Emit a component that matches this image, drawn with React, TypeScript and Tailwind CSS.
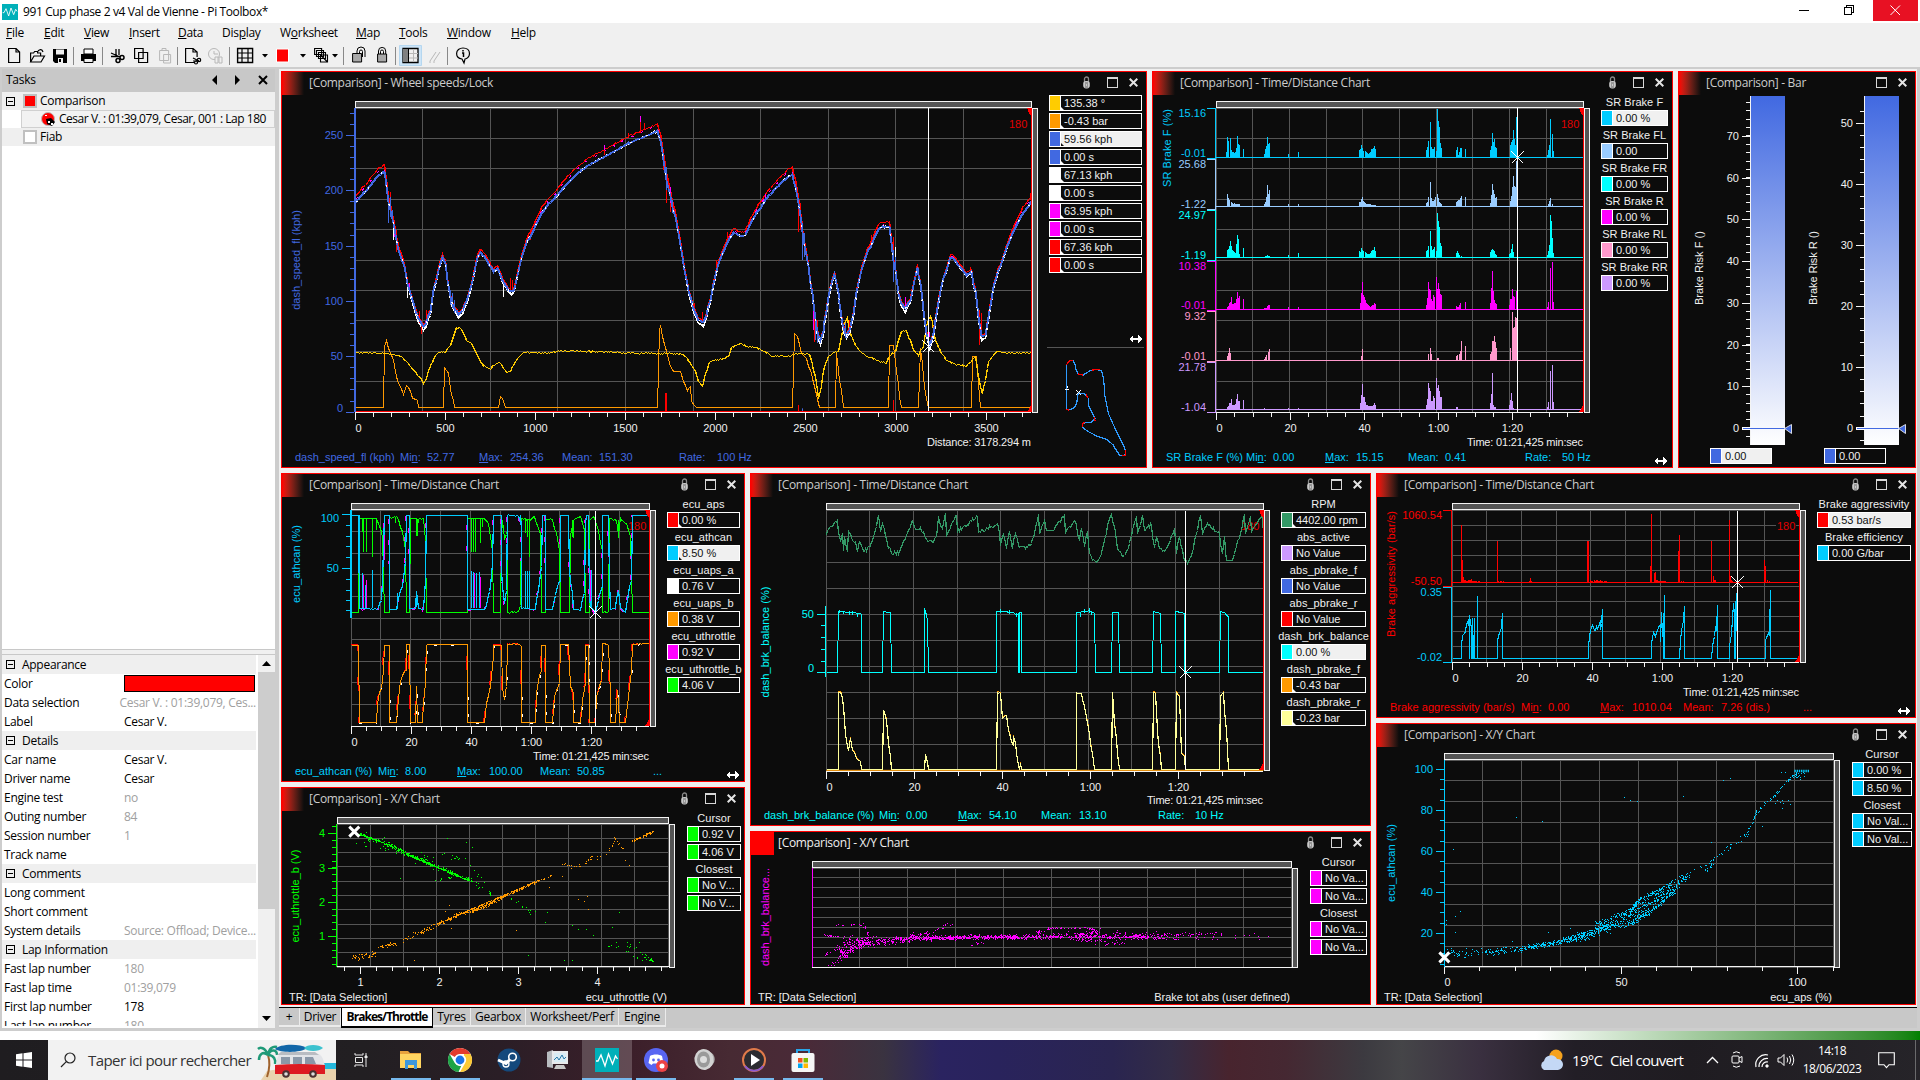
import React from "react";

type Pt = [number, number];
interface Frame {
  X: (x: number) => number;
  Y: (y: number) => number;
}

const frame = (ox: number, oy: number, sx: number): Frame => ({
  X: (x) => ox + x / sx,
  Y: (y) => oy + y / 3,
});

const rng = (seed: number) => {
  let s = seed >>> 0;
  return () => {
    s = (s + 0x6d2b79f5) >>> 0;
    let t = s;
    t = Math.imul(t ^ (t >>> 15), t | 1);
    t ^= t + Math.imul(t ^ (t >>> 7), t | 61);
    return ((t ^ (t >>> 14)) >>> 0) / 4294967296;
  };
};

const nums = (s: string): Pt[] =>
  s
    .trim()
    .split(/\s+/)
    .map((p) => p.split(",").map(Number) as Pt);

const snap = (v: number) => Math.floor(v) + 0.5;

function tracePath(f: Frame, pts: Pt[], noise = 0, seed = 1, map?: (x: number, y: number) => Pt) {
  const r = rng(seed);
  const out: string[] = [];
  pts.forEach((p, i) => {
    const b: Pt = map ? map(p[0], p[1]) : p;
    const x = f.X(b[0]);
    const y = f.Y(b[1]);
    if (i > 0) {
      const q = pts[i - 1];
      const a: Pt = map ? map(q[0], q[1]) : q;
      const ax = f.X(a[0]);
      const ay = f.Y(a[1]);
      const n = Math.floor(x - ax);
      const amp = q[1] === p[1] ? 0 : noise;
      for (let k = 1; k < n; k++) {
        const t = k / n;
        out.push(`${snap(ax + (x - ax) * t)} ${snap(ay + (y - ay) * t + (r() - 0.5) * amp)}`);
      }
    }
    out.push(`${snap(x)} ${snap(y)}`);
  });
  return "M" + out.join("L");
}

function Trace(p: { f: Frame; d: Pt[]; c: string; noise?: number; seed?: number; w?: number; dash?: string; map?: (x: number, y: number) => Pt }) {
  return (
    <path
      d={tracePath(p.f, p.d, p.noise, p.seed, p.map)}
      fill="none"
      stroke={p.c}
      strokeWidth={p.w ?? 1}
      strokeDasharray={p.dash}
      shapeRendering="crispEdges"
    />
  );
}

/* Vertical strokes rising from a baseline: "x,h x,h | x,h ..." */
function Bursts(p: { f: Frame; base: number; s: string; c: string; seed?: number; x0: number; x1: number; rough?: number }) {
  const r = rng(p.seed ?? 3);
  const rough = p.rough ?? 0.6;
  let d = `M${p.f.X(p.x0)} ${snap(p.f.Y(p.base))}H${p.f.X(p.x1)}`;
  const by = p.f.Y(p.base) + 0.5;
  p.s.split("|").forEach((grp) => {
    const g = nums(grp);
    g.forEach((q, i) => {
      const x = p.f.X(q[0]);
      d += `M${snap(x)} ${by}V${(by - q[1] / 3).toFixed(1)}`;
      if (i > 0) {
        const a = g[i - 1];
        const ax = p.f.X(a[0]);
        const n = Math.round(x - ax);
        for (let k = 1; k < n; k++) {
          const t = k / n;
          const h = (a[1] + (q[1] - a[1]) * t) * (1 - rough * r());
          d += `M${snap(ax + k)} ${by}V${(by - h / 3).toFixed(1)}`;
        }
      }
    });
  });
  return <path d={d} fill="none" stroke={p.c} strokeWidth={1} shapeRendering="crispEdges" />;
}

function Dots(p: { pts: Pt[]; c: string }) {
  const d = p.pts.map(([x, y]) => `M${Math.round(x)} ${Math.round(y)}h1v1h-1z`).join("");
  return <path d={d} fill={p.c} shapeRendering="crispEdges" />;
}

/* Scatter along a polyline; vertices hold x, y, spread and the point count up to the next vertex */
function cloud(f: Frame, line: [number, number, number, number][], seed: number): Pt[] {
  const r = rng(seed);
  const out: Pt[] = [];
  for (let i = 1; i < line.length; i++) {
    const [ax, ay, as, count] = line[i - 1];
    const [bx, by, bs] = line[i];
    for (let k = 0; k < count; k++) {
      const t = r();
      const sp = as + (bs - as) * t;
      out.push([f.X(ax + (bx - ax) * t), f.Y(ay + (by - ay) * t + (r() + r() - 1) * sp)]);
    }
  }
  return out;
}

function Txt(p: { x: number; y: number; c?: string; a?: "start" | "middle" | "end"; children: React.ReactNode; len?: number; rot?: boolean }) {
  return (
    <text
      x={p.x}
      y={p.y}
      fill={p.c ?? "#f0f0f0"}
      textAnchor={p.a ?? "start"}
      className="font-['Liberation_Sans',sans-serif] text-[11px]"
      textLength={p.len}
      transform={p.rot ? `rotate(-90 ${p.x} ${p.y})` : undefined}
    >
      {p.children}
    </text>
  );
}

function Grid(p: { f: Frame; x0: number; x1: number; y0: number; y1: number }) {
  const X0 = Math.floor(p.f.X(p.x0));
  const X1 = Math.floor(p.f.X(p.x1));
  const Y0 = Math.floor(p.f.Y(p.y0));
  const Y1 = Math.floor(p.f.Y(p.y1));
  let d = "";
  for (let i = 0; i <= 10; i++) {
    d += `M${snap(X0 + ((X1 - X0) * i) / 10)} ${Y0}V${Y1}`;
    d += `M${X0} ${snap(Y0 + ((Y1 - Y0) * i) / 10)}H${X1}`;
  }
  return (
    <g shapeRendering="crispEdges">
      <path d={d} stroke="#555555" fill="none" />
      <rect x={X0 + 0.5} y={Y0 - 6.5} width={X1 - X0} height={6} fill="#555555" stroke="#f4f4f4" />
      <rect x={X1 + 1.5} y={Y0 + 0.5} width={5} height={Y1 - Y0} fill="#555555" stroke="#f4f4f4" />
    </g>
  );
}

function LapEdge(p: { f: Frame; x1: number; y0: number; y1: number }) {
  const x = Math.floor(p.f.X(p.x1));
  const y0 = Math.floor(p.f.Y(p.y0));
  const y1 = Math.floor(p.f.Y(p.y1));
  return <path d={`M${x - 4} ${y0}h5V${y1}h-5l2-3l2-4V${y0 + 8}l-2-3z`} fill="#ff0000" shapeRendering="crispEdges" />;
}

function XAxis(p: { f: Frame; x0: number; x1: number; y: number; first: number; step: number; every: number; offset?: number; labels: string[] }) {
  const Y = Math.floor(p.f.Y(p.y)) + 1;
  let d = `M${Math.floor(p.f.X(p.x0))} ${Y - 0.5}H${p.f.X(p.x1)}`;
  const off = p.offset ?? 0;
  const labels: React.ReactNode[] = [];
  for (let i = 0; p.first + i * p.step <= p.x1 + 1; i++) {
    const x = snap(p.f.X(p.first + i * p.step));
    const major = (i - off) % p.every === 0;
    d += `M${x} ${Y}v${major ? 7 : 4}`;
    if (major) {
      const n = (i - off) / p.every;
      labels.push(
        <Txt key={i} x={x + (n === 0 && off === 0 ? 3 : 0)} y={Y + 19} a="middle">
          {p.labels[n]}
        </Txt>,
      );
    }
  }
  return (
    <g>
      <path d={d} stroke="#f4f4f4" fill="none" shapeRendering="crispEdges" />
      {labels}
    </g>
  );
}

function YAxis(p: { f: Frame; x: number; y0: number; y1: number; c: string; major: [number, string, number?][]; minor: number[]; w?: number }) {
  const X = Math.floor(p.f.X(p.x));
  let d = "";
  p.minor.forEach((y) => (d += `M${X - 5} ${snap(p.f.Y(y))}h4`));
  p.major.forEach(([y]) => (d += `M${X - 9} ${snap(p.f.Y(y))}h8`));
  return (
    <g>
      <path d={d} stroke={p.c} fill="none" shapeRendering="crispEdges" />
      <rect x={X - 1} y={Math.floor(p.f.Y(p.y0))} width={p.w ?? 2} height={Math.round(p.f.Y(p.y1) - p.f.Y(p.y0))} fill={p.c} shapeRendering="crispEdges" />
      {p.major.map(([y, t, ly]) => (
        <Txt key={t} x={X - 12} y={p.f.Y(ly ?? y) + 4} c={p.c} a="end">
          {t}
        </Txt>
      ))}
    </g>
  );
}

function Bracket(p: { f: Frame; x: number; y0: number; y1: number; c: string; top: string; bottom: string; ty: number; by: number }) {
  const X = Math.floor(p.f.X(p.x));
  return (
    <g>
      <path
        d={`M${X - 9} ${snap(p.f.Y(p.y0))}H${X - 0.5}V${snap(p.f.Y(p.y1))}H${X - 9}`}
        stroke={p.c}
        fill="none"
        shapeRendering="crispEdges"
      />
      <Txt x={X - 10} y={p.f.Y(p.ty) + 4} c={p.c} a="end">
        {p.top}
      </Txt>
      <Txt x={X - 10} y={p.f.Y(p.by) + 4} c={p.c} a="end">
        {p.bottom}
      </Txt>
    </g>
  );
}

function Cursor(p: { f: Frame; x: number; y0: number; y1: number; y: number }) {
  const x = snap(p.f.X(p.x));
  const y = snap(p.f.Y(p.y));
  return (
    <path
      d={`M${x} ${p.f.Y(p.y0)}V${p.f.Y(p.y1)}M${x - 6} ${y - 6}l12 12M${x + 6} ${y - 6}l-12 12`}
      stroke="#ffffff"
      fill="none"
      shapeRendering="crispEdges"
    />
  );
}

function BoldX(p: { x: number; y: number }) {
  return <path d={`M${p.x - 5} ${p.y - 5}l10 10M${p.x + 5} ${p.y - 5}l-10 10`} stroke="#fff" strokeWidth="3" fill="none" />;
}

/* ---------- window chrome ---------- */

function LockGlyph() {
  return (
    <svg width="9" height="13" viewBox="0 0 9 13" className="mr-4">
      <path d="M2.5 6V3a2 2 0 0 1 4 0v3" fill="none" stroke="#8a8a8a" strokeWidth="1.3" />
      <rect x="1.2" y="5" width="6.6" height="7.4" rx="2.8" fill="#c9c9c9" />
      <path d="M3 7h3M3 9h1M5 9h1M3 11h3" stroke="#666" />
    </svg>
  );
}

function DoubleArrow() {
  return (
    <svg width="13" height="8" viewBox="0 0 13 8" shapeRendering="crispEdges">
      <path d="M0 4L4 0V3H9V0L13 4L9 8V5H4V8Z" fill="#ffffff" />
    </svg>
  );
}

interface Stat {
  x: number;
  t: string;
  u?: number;
}

function Under({ t, u }: { t: string; u?: number }) {
  if (u === undefined) return <>{t}</>;
  return (
    <>
      {t.slice(0, u)}
      <span className="underline">{t[u]}</span>
      {t.slice(u + 1)}
    </>
  );
}

function Stats(p: { left: number; items: Stat[]; c: string; arrow?: boolean }) {
  return (
    <footer className="flex h-[18px] shrink-0 items-start pr-[5px] text-[11px] leading-4 whitespace-nowrap" style={{ color: p.c, paddingLeft: p.items[0].x - p.left }}>
      {p.items.map((s, i) => (
        <span key={i} className="shrink-0" style={{ width: i + 1 < p.items.length ? p.items[i + 1].x - s.x : undefined }}>
          <Under t={s.t} u={s.u} />
        </span>
      ))}
      {p.arrow && (
        <span className="mt-2 ml-auto">
          <DoubleArrow />
        </span>
      )}
    </footer>
  );
}

function XYFooter(p: { pl: number; right: string; width: number }) {
  return (
    <footer className="flex h-[15px] shrink-0 items-start justify-between pt-px text-[11px] leading-[14px] text-[#f0f0f0]" style={{ width: p.width, paddingLeft: p.pl }}>
      <span>TR: [Data Selection]</span>
      <span>{p.right}</span>
    </footer>
  );
}

interface Entry {
  label?: string;
  c?: string;
  v?: string;
  sel?: boolean;
  notch?: boolean;
}

function ValueBox({ e }: { e: Entry }) {
  return (
    <div
      className={
        e.sel
          ? "mb-0.5 flex h-4 overflow-hidden border border-white bg-[#f0f0f0] text-[11px] leading-[14px] whitespace-nowrap text-[#111]"
          : "mb-0.5 flex h-4 overflow-hidden border border-white bg-[#0c0c0c] text-[11px] leading-[14px] whitespace-nowrap text-[#f0f0f0]"
      }
    >
      <span className="w-2.5 shrink-0" style={{ backgroundColor: e.c }} />
      <span className="w-[3px] shrink-0 border-l border-white">
        {e.notch && (
          <svg width="3" height="14" viewBox="0 0 3 14">
            <path d="M0 11l3 3H0z" fill={e.sel ? "#111" : "#fff"} />
          </svg>
        )}
      </span>
      <span className="pl-[1px]">{e.v}</span>
    </div>
  );
}

function Legend(p: { w: string; items: Entry[]; children?: React.ReactNode }) {
  return (
    <aside className={"flex shrink-0 flex-col " + p.w}>
      {p.items.map((e, i) =>
        e.label ? (
          <div key={i} className="flex h-[15px] justify-center overflow-visible text-[11px] leading-[14px] tracking-[0.05px] whitespace-nowrap text-[#f0f0f0]">
            {e.label}
          </div>
        ) : (
          <ValueBox key={i} e={e} />
        ),
      )}
      {p.children}
    </aside>
  );
}

function Panel(p: { title: string; box: string; solid?: boolean; lock?: boolean; footer?: React.ReactNode; children: React.ReactNode }) {
  return (
    <section className={"flex shrink-0 flex-col overflow-hidden border border-[#ff0000] bg-[#0c0c0c] font-['Liberation_Sans',sans-serif] " + p.box}>
      <header className="flex h-[23px] shrink-0 items-center pr-2">
        <div className={p.solid ? "h-full w-[23px] bg-[#ff0000]" : "h-full w-[22px] bg-linear-to-r from-[#ff0000] to-[#0c0c0c]"} />
        <span
          className={
            p.solid
              ? "ml-1 flex-1 pb-0.5 font-['Open_Sans',sans-serif] text-[12px] tracking-[-0.3px] text-[#f0f0f0]"
              : "ml-[5px] flex-1 pb-0.5 font-['Open_Sans',sans-serif] text-[12px] tracking-[-0.3px] text-[#cccccc]"
          }
        >
          {p.title}
        </span>
        <div className="flex items-center pb-0.5">
          {p.lock !== false && <LockGlyph />}
          <span className="mr-[11px] h-[11px] w-[11px] border border-t-2 border-[#d8d8d8]" />
          <svg width="9" height="9" viewBox="0 0 9 9">
            <path d="M.7.7l7.6 7.6M8.3.7L.7 8.3" stroke="#e4e4e4" strokeWidth="2" />
          </svg>
        </div>
      </header>
      <div className="flex min-h-0 flex-1">{p.children}</div>
      {p.footer}
    </section>
  );
}

function Plot(p: { x: number; y: number; w: number; h: number; children: React.ReactNode }) {
  return (
    <svg width={p.w} height={p.h} viewBox={`${p.x} ${p.y} ${p.w} ${p.h}`} className="shrink-0">
      {p.children}
    </svg>
  );
}

/* ---------- Wheel speeds ---------- */

const F1 = frame(280, 70, 3);
const shift = (s: string, dx: number): Pt[] => nums(s).map(([x, y]) => [x + dx, y] as Pt);

const SPEED: Pt[] = [
  ...nums(
    "226,398 255,365 280,335 300,312 313,305 320,350 330,420 340,460 350,510 360,555 372,590 382,640 395,680 410,730 420,755 430,770 440,758 450,725 458,680 465,640 475,600 488,562 495,580 503,630 512,680 522,715 535,732 548,722 558,695 570,655 580,620 590,575 600,548 612,560 625,580 640,603 652,595 662,615 672,640 685,660 695,665 703,655 712,615 725,565 740,520 760,480 785,430 810,398 835,372 860,343 890,313 930,282 970,262 1010,240 1040,223 1080,205 1110,192 1132,182 1140,210 1150,270 1160,330 1172,380 1185,440 1200,525 1212,600 1225,660 1240,715 1255,750 1270,758 1280,735 1290,690 1300,640",
  ),
  ...shift(
    "25,580 40,545 55,510 70,488 95,500 105,495 125,455 150,415 170,385 190,362 215,338 240,315 248,313 255,350 265,400 275,460 285,540 295,590 302,640 310,700 320,770 330,812 340,785 348,720 355,680 365,640 374,612 380,640 388,700 398,760 408,795 418,780 430,730 440,665 455,600 470,555 490,510 510,472 537,470 545,520 555,600 565,670 575,700 587,716 600,690 612,630 622,592 630,640 640,720 650,790 658,830 670,790 680,730 692,660 705,610 720,562 730,565 745,585 770,615 785,605 795,660 805,740 815,800 825,795 835,740 850,650 870,590 895,520 920,465 945,420 964,395",
    1290,
  ),
];
const clamp = (v: number) => Math.max(0, Math.min(1, v));
const redMap = (x: number, y: number): Pt => [x, y - 5 - 16 * clamp((640 - y) / 300)];
const whiteMap = (x: number, y: number): Pt => [x, y + 10 * clamp((y - 560) / 150)];
const magMap = (x: number, y: number): Pt => [x, y - 4 - 12 * clamp((560 - y) / 300)];

const STEER: Pt[] = [
  ...nums(
    "226,848 300,850 340,853 360,858 375,872 395,893 410,910 430,940 440,925 450,890 465,855 480,846 497,848 510,825 522,790 530,773 541,774 550,790 562,815 575,820 590,850 605,880 618,892 632,897 642,885 655,878 668,888 680,908 690,905 700,885 715,862 735,847 800,849 850,843 980,845 1040,850 1200,851 1215,860 1230,880 1245,905 1255,935 1268,950 1277,910 1285,882 1300,870",
  ),
  ...shift(
    "20,871 55,860 65,832 90,820 110,828 140,833 165,845 185,858 230,860 270,850 298,852 305,870 315,920 325,985 335,950 342,890 355,860 370,848 385,845 395,800 405,755 412,742 420,790 435,825 450,845 470,860 500,870 530,880 540,855 555,845 565,810 575,785 590,782 600,810 610,840 625,855 640,830 650,770 660,740 668,755 675,810 690,845 710,870 740,885 770,888 790,865 797,860 803,900 812,950 818,970 825,930 835,875 850,855 860,845 880,848 964,850",
    1290,
  ),
];
const PRESS: Pt[] = [
  ...nums(
    "226,1012 311,1012 314,830 318,812 325,835 340,870 350,920 360,950 370,973 380,947 392,965 398,985 412,990 416,1012 490,1012 494,893 505,910 512,955 523,1012 655,1012 660,980 668,985 677,1012 1132,1012 1137,780 1141,765 1147,800 1160,845 1172,890 1180,905 1200,905 1210,935 1222,962 1230,950 1235,995 1250,1012",
  ),
  ...shift(
    "247,1012 253,790 262,800 275,850 290,865 300,900 312,950 325,1000 328,1012 376,1012 378,850 385,900 393,960 401,1012 535,1012 539,825 550,825 560,905 568,980 575,1012 625,1012 630,835 638,880 645,970 652,1000 655,1012 783,1012 788,860 798,860 806,940 812,1012 964,1012",
    1290,
  ),
];

const spikes = (f: Frame, s: string) =>
  s
    .trim()
    .split(/\s+/)
    .map((q) => q.split(",").map(Number))
    .map(([x, a, b]) => `M${snap(f.X(x))} ${f.Y(a)}V${f.Y(b)}`)
    .join("");

function WheelSpeeds() {
  const f = F1;
  const ys = [196, 361, 529, 694, 859, 1027];
  const minor: number[] = [130, 163];
  for (let i = 0; i < 5; i++) for (let k = 1; k < 5; k++) minor.push(ys[i] + ((ys[i + 1] - ys[i]) * k) / 5);
  return (
    <Plot x={282} y={95} w={767} h={354}>
      <Grid f={f} x0={226} x1={2254} y0={115} y1={1027} />
      <Txt x={1009} y={128} c="#e00000">
        180
      </Txt>
      <Trace f={f} d={PRESS} c="#ff9900" noise={0.6} />
      <Trace f={f} d={STEER} c="#ffcc00" noise={1.6} seed={8} w={1.3} />
      <Trace f={f} d={SPEED} c="#ffffff" noise={1} seed={4} map={whiteMap} w={1.5} />
      <path d={spikes(f, "383,645,685 340,450,510 670,640,682 1555,390,440 1845,530,600 1602,720,790")} stroke="#fff" shapeRendering="crispEdges" />
      <Trace f={f} d={SPEED} c="#ff00ff" noise={1.5} seed={5} map={magMap} dash="3 9" />
      <Trace f={f} d={SPEED} c="#ff0000" noise={1.4} seed={6} map={redMap} w={1.4} />
      <path
        d={spikes(
          f,
          "1080,150,190 1094,160,180 973,232,255 1044,188,205 330,365,430 326,380,440 349,480,545 418,722,760 424,750,792 440,720,760 690,625,660 697,630,660 1158,300,398 1150,270,300 1170,370,425 1242,700,730 1268,725,760 1555,380,485 1562,400,480 1342,485,520 1840,500,560 1310,570,605 1775,495,515 2250,370,390 2072,590,610 2098,720,825 2104,730,800 1708,750,790 1604,720,815 1612,750,820 750,480,510 488,550,570 598,538,560",
        )}
        stroke="#ff0000"
        shapeRendering="crispEdges"
      />
      <path
        d={spikes(f, "1081,138,155 974,225,240 1160,300,330 1170,350,400 1600,715,780 1568,460,520 1876,680,715 1948,785,800 1455,372,385 343,480,500 388,640,660 2094,730,760")}
        stroke="#ff00ff"
        shapeRendering="crispEdges"
      />
      <Trace f={f} d={SPEED} c="#4169e1" noise={1} seed={7} w={1.9} />
      <path
        d={spikes(f, "326,380,458 331,380,440 337,420,455 511,660,705 516,670,715 523,690,730 1568,460,570 1572,490,560 1840,540,635 1846,560,630 1945,790,850 1160,290,360 1177,390,430 1606,750,810 1612,770,820 1697,760,805")}
        stroke="#4169e1"
        shapeRendering="crispEdges"
      />
      <Trace f={f} d={SPEED} c="#ffffff" noise={0.5} seed={14} map={(x, y) => [x, y]} dash="2 17" />
      <rect x={355} y={411} width={676} height={1} fill="#ff0000" />
      <path d={spikes(f, "1157,970,1027 1160,970,1027 1555,1005,1027 1839,990,1027")} stroke="#ff0000" shapeRendering="crispEdges" />
      <path d={spikes(f, "1567,1015,1027")} stroke="#4169e1" />
      <LapEdge f={f} x1={2254} y0={115} y1={1027} />
      <Cursor f={f} x={1945} y0={115} y1={1027} y={828} />
      <XAxis f={f} x0={226} x1={2254} y={1027} first={226} step={54.07} every={5} labels={["0", "500", "1000", "1500", "2000", "2500", "3000", "3500"]} />
      <rect x={355} y={411} width={676} height={1} fill="#ff0000" />
      <YAxis
        f={f}
        x={226}
        y0={115}
        y1={1027}
        c="#4169e1"
        minor={minor}
        major={[
          [196, "250"],
          [361, "200"],
          [529, "150"],
          [694, "100"],
          [859, "50"],
          [1027, "0", 1015],
        ]}
      />
      <Txt x={300} y={260} c="#4169e1" a="middle" rot>
        dash_speed_fl (kph)
      </Txt>
      <Txt x={1031} y={446} a="end" len={104}>
        Distance: 3178.294 m
      </Txt>
    </Plot>
  );
}

function TrackMap() {
  const f = frame(710, 70, 3);
  const line = (s: string) => "M" + nums(s).map(([x, y]) => `${f.X(x).toFixed(1)} ${f.Y(y).toFixed(1)}`).join("L");
  return (
    <svg width="97" height="120" viewBox="1047 347 97 120" className="-ml-0.5 shrink-0" shapeRendering="crispEdges">
      <path d="M1047 347.5h97" stroke="#555" />
      <path
        d={line(
          "1069,955 1069,885 1080,871 1090,872 1096,885 1098,900 1105,912 1120,915 1140,902 1160,898 1175,903 1181,930 1185,980 1195,1030 1215,1075 1240,1125 1246,1140 1246,1155 1230,1157 1215,1135 1210,1125 1190,1108 1160,1098 1130,1082 1117,1070 1118,1060 1145,1056 1155,1045 1140,1015 1135,1005 1135,985 1125,972 1105,968 1102,985 1100,1000 1093,1013 1075,1021 1069,1015 1069,955",
        )}
        fill="none"
        stroke="#2f9bff"
        strokeWidth="1.2"
      />
      {["1069,885 1080,871 1090,872", "1105,912 1118,915", "1145,900 1170,899", "1246,1140 1246,1155 1235,1157", "1117,1070 1118,1060 1125,1058", "1155,1052 1152,1040", "1135,985 1128,974", "1069,1018 1078,1021"].map((s) => (
        <path key={s} d={line(s)} fill="none" stroke="#ff0000" strokeWidth="1.2" />
      ))}
      <path d="M1076 390l5 5M1081 390l-5 5M1065 389.5h4M1067 388v-2" stroke="#fff" fill="none" />
    </svg>
  );
}

/* ---------- SR brake ---------- */

const F2 = frame(1150, 70, 2.958);
const SR: { c: string; base: number; y0: number; y1: number; top: string; bot: string; ty: number; by: number; s: string }[] = [
  {
    c: "#00ccff", base: 262, y0: 115, y1: 266, top: "15.16", bot: "-0.01", ty: 130, by: 250,
    s: "226,18 230,62 237,60 241,24 253,18 258,66 265,40 266,12|276,28|338,12 347,62 354,45|410,13|439,17|620,24 627,40 636,22 648,14 655,26 665,36 668,28|818,24 825,50 829,107 833,32 838,28 843,34 847,22|850,148 852,110 857,85 863,30|906,24 911,32 913,8 919,30 921,30|933,28|1007,24 1013,74 1019,57 1025,30|1065,40 1075,85 1080,40 1084,122 1086,60|1177,8 1182,40 1186,117 1190,72 1193,20",
  },
  {
    c: "#99ccff", base: 409, y0: 267, y1: 419, top: "25.68", bot: "-1.22", ty: 283, by: 403,
    s: "228,8 230,38 240,14 253,10 265,10|338,8 344,30 347,66 350,40 354,50|410,8|439,8|619,14 629,30 638,12 650,10 668,6|818,12 825,30 829,76 833,26 840,18 850,38 855,16 862,8|906,14 911,18 919,28 921,34|933,30|1007,12 1013,68 1019,40 1025,30|1065,18 1075,92 1080,60 1084,138|1180,10 1186,28 1190,10",
  },
  {
    c: "#00ffff", base: 562, y0: 420, y1: 571, top: "24.97", bot: "-1.19", ty: 435, by: 555,
    s: "228,24 238,50 243,24 253,16 258,70 263,50 266,12|276,30|338,4 347,8 354,6|410,8|439,14|619,20 627,30 636,18 648,12 655,22 665,32 668,22|818,22 825,36 829,80 833,36 838,26 843,32 847,20|850,136 852,110 857,85 863,36|906,14 911,22 921,6|1007,18 1013,28 1020,20 1025,8|1064,12 1073,42 1078,4|1177,8 1182,40 1185,130 1188,110 1191,60 1193,16",
  },
  {
    c: "#ff00ff", base: 718, y0: 573, y1: 722, top: "10.38", bot: "-0.01", ty: 588, by: 706,
    s: "228,8 240,38 244,18 253,22 258,54 266,36|276,32|338,5 350,14 354,14|410,8|439,8|622,20 629,84 634,40 640,20 655,12 663,22 668,16|818,16 824,84 829,60 832,32 838,46 843,40|847,100 852,80 857,60 863,44|906,12 911,8 919,22|933,24|1007,22 1013,116 1019,30 1025,18|1064,16 1072,64 1078,40|1083,58|1177,8 1184,60 1186,126 1190,144 1193,24",
  },
  {
    c: "#ff99cc", base: 871, y0: 723, y1: 874, top: "9.32", bot: "-0.01", ty: 739, by: 859,
    s: "229,14 235,38 239,24|340,6 350,28 354,36|627,14 629,36|825,20 829,40 834,8|850,10 852,8|908,16 915,20 921,60|933,46|1008,20 1014,60 1019,76 1025,40|1067,40 1071,148 1075,100 1082,132 1084,130",
  },
  {
    c: "#cc99ff", base: 1018, y0: 876, y1: 1027, top: "21.78", bot: "-1.04", ty: 891, by: 1011,
    s: "228,8 240,34 244,16 253,18 258,48 266,26|276,30|338,5|410,6|439,6|622,20 629,78 634,40 640,16 655,12 663,20 668,14|818,16 824,80 829,58 832,28 838,42 843,36|847,96 852,76 857,56 863,40|906,10 911,8|1007,20 1013,110 1017,14 1022,8|1064,14 1069,50 1074,6|1177,8 1184,60 1186,118 1190,136 1193,24",
  },
];

function SRBrake() {
  const f = F2;
  return (
    <Plot x={1153} y={95} w={448} h={354}>
      <Grid f={f} x0={196} x1={1282} y0={115} y1={1027} />
      <Txt x={1561} y={128} c="#e00000">
        180
      </Txt>
      {SR.map((t, i) => (
        <React.Fragment key={t.c}>
          <Bursts f={f} base={t.base} s={t.s} c={t.c} seed={i + 11} x0={196} x1={1282} rough={0.35} />
          <Bracket f={f} x={196} y0={t.y0} y1={t.y1} c={t.c} top={t.top} bottom={t.bot} ty={t.ty} by={t.by} />
        </React.Fragment>
      ))}
      <LapEdge f={f} x1={1282} y0={115} y1={1027} />
      <Cursor f={f} x={1087} y0={115} y1={1027} y={262} />
      <XAxis f={f} x0={196} x1={1282} y={1027} first={196} step={54.75} every={4} labels={["0", "20", "40", "1:00", "1:20"]} />
      <Txt x={1171} y={148} c="#00ccff" a="middle" rot len={78}>
        SR Brake F (%)
      </Txt>
      <Txt x={1583} y={446} a="end" len={116}>
        Time: 01:21,425 min:sec
      </Txt>
    </Plot>
  );
}

/* ---------- Bars ---------- */

function BarScale(p: { id: string; x: number; major: number[]; labels: string[]; step: number; title: string; tx: number }) {
  const f = frame(1670, 0, 3);
  const X = f.X(p.x);
  const z = Math.floor(f.Y(1285));
  let d = "";
  for (let y = 1285; y > 300; y -= p.step) d += `M${X - 4} ${snap(f.Y(y))}h4`;
  d += `M${X - 4} ${snap(f.Y(1285 + p.step))}h4`;
  p.major.forEach((y) => (d += `M${X - 8} ${snap(f.Y(y))}h8`));
  return (
    <g>
      <defs>
        <linearGradient id={p.id} x1="0" y1="0" x2="0" y2="1">
          <stop offset="0" stopColor="#4169e1" />
          <stop offset="1" stopColor="#ffffff" />
        </linearGradient>
      </defs>
      <rect x={X} y={96} width={35} height={349} fill={`url(#${p.id})`} />
      <path d={d + `M${X + 0.5} 96V445`} stroke="#f4f4f4" shapeRendering="crispEdges" />
      {p.major.map((y, i) => (
        <Txt key={y} x={X - 11} y={f.Y(y) + 4} a="end">
          {p.labels[i]}
        </Txt>
      ))}
      <rect x={X - 8} y={z - 1} width={9} height={3} fill="#fff" />
      <rect x={X - 7} y={z} width={42} height={1} fill="#4169e1" />
      <path d={`M${X + 34.5} ${z + 0.5}l7-4v9z`} fill="#4169e1" stroke="#fff" strokeWidth="0.8" />
      <Txt x={p.tx} y={268} a="middle" rot len={74}>
        {p.title}
      </Txt>
    </g>
  );
}

/* ---------- Throttle ---------- */

const F4 = frame(280, 470, 3);
const ATH = nums(
  "214,135 236,135 238,415 290,418 296,415 303,390 308,330 312,135 328,135 329,418 350,418 356,385 366,350 376,270 379,135 388,135 389,416 405,416 410,365 414,415 430,418 437,330 439,135 562,135 563,418 613,418 620,405 632,350 638,280 640,135 663,135 664,300 672,400 680,360 682,135 715,138 720,155 723,155 724,415 766,418 775,360 784,290 786,135 796,135 797,418 818,418 830,360 840,330 841,135 866,135 868,300 876,370 880,418 902,420 912,370 915,160 918,135 926,135 927,380 932,410 946,430 955,390 966,350 968,135 985,135 988,330 992,418 1007,415 1014,360 1020,415 1036,428 1045,370 1053,330 1057,135 1108,135",
);
const UTB = nums(
  "214,428 236,428 238,146 288,146 300,175 308,200 312,428 328,428 329,146 350,140 358,160 366,185 376,240 379,428 388,428 390,146 408,146 410,195 414,148 430,146 437,210 440,428 562,428 563,146 613,146 625,160 632,200 638,245 640,428 660,428 664,200 668,150 674,205 682,180 683,428 715,425 720,405 725,146 750,150 762,140 768,160 780,190 783,428 795,428 797,146 818,148 828,190 838,240 840,428 868,428 871,200 880,150 900,140 912,180 916,428 928,428 929,150 940,140 955,180 966,240 968,428 985,425 988,146 1008,150 1015,195 1022,146 1040,160 1052,200 1057,428 1108,428",
);
const UAPS = nums(
  "214,525 235,525 238,757 288,757 292,700 303,655 310,600 312,526 328,526 329,757 349,757 354,685 362,635 372,605 379,600 380,523 388,523 390,757 405,757 410,650 413,757 427,757 435,640 440,525 460,523 562,523 563,757 613,757 618,700 630,650 640,560 641,525 663,525 667,655 673,688 680,650 682,524 712,521 724,530 725,757 765,757 770,670 783,600 785,525 796,525 797,757 818,757 823,680 838,640 840,524 865,524 872,650 880,670 881,757 902,757 907,690 916,640 917,525 926,525 928,757 946,757 950,680 965,630 968,520 985,525 990,670 992,757 1006,757 1012,660 1016,700 1019,757 1035,757 1045,680 1055,600 1057,524 1108,520",
);

function Throttle() {
  const f = F4;
  return (
    <Plot x={282} y={497} w={385} h={266}>
      <Grid f={f} x0={214} x1={1108} y0={122} y1={770} />
      <Txt x={628} y={530} c="#e00000">
        180
      </Txt>
      <Trace f={f} d={ATH} c="#ff00ff" noise={2} map={(x, y) => [x - 2, y + 2]} dash="5 16" />
      <path d={spikes(f, "251,315,415 260,330,415 584,310,415 588,330,415 600,320,415 312,150,270 841,170,240 1057,150,240 932,300,400")} stroke="#ff00ff" shapeRendering="crispEdges" />
      <Trace f={f} d={UTB} c="#00ff00" noise={1.6} seed={4} />
      <path d={spikes(f, "246,146,185 249,146,245 259,146,245 278,146,262 288,146,180 575,146,245 580,146,245 586,146,245 600,146,220 608,146,170 736,146,190 742,146,200 748,146,260 735,146,170 408,146,198 411,146,198 876,150,200 880,150,205 346,140,158 1014,150,205")} stroke="#00ff00" shapeRendering="crispEdges" />
      <Trace f={f} d={ATH} c="#00ccff" noise={1.2} seed={5} w={1.2} />
      <path d={spikes(f, "248,310,415 277,300,415 257,345,415 574,303,415 581,305,415 590,310,415 598,305,415 736,303,415 742,303,415 748,303,415 934,300,415 410,362,410 352,370,418 720,135,165 237,135,260")} stroke="#00ccff" shapeRendering="crispEdges" />
      <Trace f={f} d={UAPS} c="#ffffff" noise={1} map={(x, y) => [x + 1, y + 2]} dash="3 14" />
      <Trace f={f} d={UAPS} c="#ff0000" noise={1} map={(x, y) => [x - 2, y - 1]} dash="14 26" />
      <Trace f={f} d={UAPS} c="#ff9900" noise={1} />
      <LapEdge f={f} x1={1108} y0={122} y1={770} />
      <Cursor f={f} x={946} y0={122} y1={770} y={428} />
      <XAxis f={f} x0={214} x1={1108} y={770} first={214} step={45} every={4} labels={["0", "20", "40", "1:00", "1:20"]} />
      <YAxis
        f={f}
        x={214}
        y0={122}
        y1={445}
        c="#00ccff"
        minor={[165, 198, 230, 262, 328, 360, 390, 421]}
        major={[
          [133, "100", 144],
          [295, "50"],
        ]}
      />
      <Txt x={300} y={564} c="#00ccff" a="middle" rot len={78}>
        ecu_athcan (%)
      </Txt>
      <Txt x={649} y={760} a="end" len={116}>
        Time: 01:21,425 min:sec
      </Txt>
    </Plot>
  );
}

/* ---------- RPM / balance ---------- */

const F5 = frame(750, 470, 2.489);
const RPM = nums(
  "190,195 192,180 218,150 221,190 226,215 229,190 233,240 236,200 240,235 243,240 246,180 256,210 262,215 268,245 272,215 285,245 300,230 310,190 320,137 324,185 331,160 337,200 345,235 358,252 372,245 385,210 404,150 410,170 432,185 437,205 455,218 465,200 470,138 478,175 486,130 488,195 514,135 517,185 566,138 569,188 612,165 617,160 623,225 630,190 638,235 645,185 653,235 660,190 668,225 685,235 697,225 708,190 718,133 721,190 734,150 737,180 755,180 783,135 786,190 808,150 813,165 819,210 826,175 833,230 839,185 845,250 853,270 862,278 875,250 885,200 899,130 906,170 915,235 928,260 940,240 950,200 961,140 965,190 977,137 982,180 1000,165 1006,230 1012,200 1020,235 1032,245 1040,230 1057,175 1062,250 1068,200 1078,260 1088,280 1098,260 1110,200 1122,135 1126,190 1138,160 1160,185 1168,190 1175,250 1180,200 1186,270 1200,270 1212,230 1230,135 1234,190 1245,140 1249,185 1275,135 1277,195",
);
const BAL = nums(
  "190,607 218,607 220,425 255,427 277,432 278,607 330,607 332,425 350,428 352,607 434,607 435,415 438,425 443,450 445,607 613,607 614,424 655,427 663,435 668,430 669,607 671,607 672,428 676,428 677,607 812,607 813,428 845,422 857,430 859,607 900,607 902,426 917,428 919,607 1003,607 1004,425 1022,430 1024,607 1059,607 1060,424 1081,430 1082,607 1169,607 1171,424 1184,430 1190,440 1191,607 1278,607",
);
const PBR = nums(
  "190,899 220,899 221,667 227,670 232,710 237,790 244,840 250,805 256,840 265,865 275,875 278,899 331,899 333,720 340,750 345,820 352,899 434,899 438,853 445,899 613,899 615,667 624,670 628,745 638,735 643,780 655,825 657,800 665,870 670,899 674,880 676,899 812,899 813,667 825,670 832,710 845,790 852,850 858,899 899,899 902,667 908,760 915,850 920,899 1003,899 1004,667 1010,670 1015,780 1021,860 1024,899 1060,899 1062,667 1068,680 1073,850 1082,860 1084,899 1169,899 1171,680 1178,667 1185,780 1191,899 1278,899",
);

function Balance() {
  const f = F5;
  return (
    <Plot x={751} y={497} w={530} h={310}>
      <Grid f={f} x0={190} x1={1278} y0={122} y1={901} />
      <Txt x={1241} y={530} c="#e00000">
        180
      </Txt>
      <Trace f={f} d={RPM} c="#339966" noise={4} seed={2} w={1.2} />
      <Trace f={f} d={BAL} c="#00ffff" noise={0} />
      <path d={spikes(f, "224,420,430 233,422,432 247,424,434 255,424,436 268,428,440 624,418,430 645,420,432 663,428,440 822,425,440 833,418,430 845,414,430 850,424,436")} stroke="#00ffff" shapeRendering="crispEdges" />
      <path d={`M${f.X(190)} ${f.Y(901)}H${f.X(1278)}`} stroke="#ff9900" />
      <Trace f={f} d={PBR} c="#ff9900" map={(x, y) => [x, y > 890 ? y : y - 3]} dash="12 10" />
      <Trace f={f} d={PBR} c="#ffff99" noise={1} seed={9} w={1.2} />
      <LapEdge f={f} x1={1278} y0={122} y1={901} />
      <Cursor f={f} x={1084} y0={122} y1={901} y={607} />
      <XAxis f={f} x0={190} x1={1278} y={903} first={190} step={54.8} every={4} labels={["0", "20", "40", "1:00", "1:20"]} />
      <YAxis
        f={f}
        x={190}
        y0={408}
        y1={620}
        c="#00ffff"
        w={1}
        minor={[466, 502, 538, 574]}
        major={[
          [433, "50"],
          [607, "0", 595],
        ]}
      />
      <Txt x={769} y={642} c="#00ffff" a="middle" rot len={111}>
        dash_brk_balance (%)
      </Txt>
      <Txt x={1263} y={804} a="end" len={116}>
        Time: 01:21,425 min:sec
      </Txt>
    </Plot>
  );
}

/* ---------- Aggressivity ---------- */

const F6 = frame(1370, 470, 2.851);
const EFF = nums(
  "235,566 261,566 261,530 264,495 269,490 273,485 275,462 280,450 283,480 284,566 284,436 288,475 290,566 291,566 293,445 294,566 297,445 299,566 306,566 306,375 307,566 363,566 363,512 368,488 371,485 375,470 377,430 378,566 622,566 623,530 626,500 630,480 634,465 640,482 646,470 650,475 656,450 658,478 661,460 662,417 663,566 802,566 803,520 808,488 813,500 820,480 828,462 829,515 832,427 834,500 836,430 836,566 838,566 839,375 840,566 882,566 884,510 889,480 893,450 896,408 897,566 974,566 976,530 982,500 985,470 988,480 990,405 991,566 1025,566 1026,525 1032,490 1036,400 1038,440 1039,566 1041,395 1042,566 1045,370 1047,566 1127,566 1128,510 1135,490 1138,497 1141,360 1142,566 1224,566",
);

function Aggressivity() {
  const f = F6;
  return (
    <Plot x={1377} y={497} w={440} h={202}>
      <Grid f={f} x0={235} x1={1224} y0={122} y1={578} />
      <rect x={1776} y={521} width={20} height={10} fill="#0c0c0c" />
      <Txt x={1777} y={530} c="#e00000">
        180
      </Txt>
      <Bursts
        f={f}
        base={337}
        c="#ff0000"
        seed={21}
        x0={235}
        x1={1220}
        s="261,175|264,70 267,18 270,8|272,8 288,12 300,6 313,5|363,125|367,6 380,5|454,6 457,14 460,6|620,125|622,125|628,8 645,8 658,10 675,7|800,50|803,208|811,30 814,32 817,10|820,8 843,6|880,95|882,143|888,6 895,5|973,125|979,22 985,8|1024,190|1027,20 1030,8|1034,5 1044,4|1125,70 1128,50|1132,8 1140,5"
      />
      <Trace f={f} d={EFF} c="#00ccff" noise={3} seed={3} w={1.1} />
      <Bracket f={f} x={235} y0={122} y1={350} c="#ff0000" top="1060.54" bottom="-50.50" ty={135} by={333} />
      <Bracket f={f} x={235} y0={352} y1={577} c="#00ccff" top="0.35" bottom="-0.02" ty={367} by={562} />
      <LapEdge f={f} x1={1224} y0={122} y1={578} />
      <Cursor f={f} x={1047} y0={122} y1={578} y={337} />
      <XAxis f={f} x0={235} x1={1224} y={578} first={235} step={49.9} every={4} labels={["0", "20", "40", "1:00", "1:20"]} />
      <Txt x={1395} y={574} c="#ff0000" a="middle" rot len={126}>
        Brake aggressivity (bar/s)
      </Txt>
      <Txt x={1799} y={696} a="end" len={116}>
        Time: 01:21,425 min:sec
      </Txt>
    </Plot>
  );
}

/* ---------- XY charts ---------- */

const F7 = frame(280, 780, 2.45);
function XYThrottle() {
  const f = F7;
  const green = [
    ...cloud(f, [[195, 162, 5, 110], [270, 196, 10, 70], [320, 225, 6, 90], [365, 250, 8, 110], [470, 303, 5, 0]], 1),
    ...cloud(f, [[205, 175, 30, 22], [300, 215, 28, 20], [470, 303, 10, 12], [520, 345, 12, 0]], 2),
    ...cloud(f, [[345, 225, 20, 16], [450, 235, 12, 8], [500, 300, 12, 0]], 3),
    ...cloud(f, [[560, 350, 6, 14], [630, 405, 16, 4], [760, 460, 18, 8], [850, 515, 18, 16], [912, 540, 10, 0]], 4),
    ...cloud(f, [[380, 300, 4, 10], [430, 290, 6, 0]], 5),
    ...cloud(f, [[850, 490, 8, 8], [890, 520, 14, 4], [915, 540, 4, 0]], 6),
    ...nums("410,175 455,187 471,202 186,190 293,295 830,395 814,442 880,487 655,395 608,525 697,541 716,541 905,540 908,538 912,541").map(([x, y]): Pt => [f.X(x), f.Y(y)]),
  ];
  const orange = [
    ...cloud(f, [[300, 478, 10, 40], [384, 433, 8, 60], [440, 400, 6, 90], [500, 378, 8, 60], [547, 348, 5, 80], [628, 304, 4, 14], [665, 285, 4, 0]], 7),
    ...cloud(f, [[176, 532, 14, 36], [235, 522, 12, 0]], 8),
    ...cloud(f, [[235, 500, 10, 32], [285, 490, 8, 0]], 9),
    ...cloud(f, [[690, 257, 8, 12], [735, 258, 10, 5], [760, 235, 8, 10], [800, 215, 16, 0]], 10),
    ...cloud(f, [[800, 220, 18, 8], [820, 180, 12, 7], [848, 220, 8, 0]], 12),
    ...cloud(f, [[860, 186, 4, 14], [885, 170, 4, 20], [915, 153, 3, 0]], 13),
    ...nums("753,349 746,364 755,387 731,358 579,451 415,376 420,444 329,541 658,322 690,289 855,256 845,240 404,392").map(([x, y]): Pt => [f.X(x), f.Y(y)]),
  ];
  const minor: number[] = [];
  for (let y = 140; y < 560; y += 20.6) minor.push(y);
  return (
    <Plot x={282} y={811} w={405} h={178}>
      <Grid f={f} x0={140} x1={952} y0={134} y1={562} />
      <Dots pts={green} c="#00ff00" />
      <path d={`M${f.X(195)} ${f.Y(162)}L${f.X(270)} ${f.Y(196)}M${f.X(310)} ${f.Y(224)}L${f.X(465)} ${f.Y(303)}`} stroke="#00ff00" strokeDasharray="9 2 5 1" shapeRendering="crispEdges" />
      <Dots pts={orange} c="#ff9900" />
      <path d={`M${f.X(384)} ${f.Y(433)}L${f.X(635)} ${f.Y(300)}M${f.X(872)} ${f.Y(180)}L${f.X(915)} ${f.Y(153)}`} stroke="#ff9900" strokeDasharray="6 3 8 1" shapeRendering="crispEdges" />
      <XAxis f={f} x0={140} x1={952} y={560} first={158.2} step={38.8} every={5} offset={1} labels={["1", "2", "3", "4"]} />
      <YAxis
        f={f}
        x={142}
        y0={134}
        y1={562}
        c="#00ff00"
        w={1}
        minor={minor}
        major={[
          [160, "4"],
          [265, "3"],
          [367, "2"],
          [469, "1"],
        ]}
      />
      <BoldX x={f.X(182)} y={f.Y(155)} />
      <Txt x={299} y={896} c="#00ff00" a="middle" rot len={93}>
        ecu_uthrottle_b (V)
      </Txt>
    </Plot>
  );
}

const F8 = frame(740, 820, 2.45);
function XYBalance() {
  const f = F8;
  const pts = [
    ...cloud(f, [[250, 372, 30, 70], [300, 366, 20, 70], [350, 364, 16, 80], [430, 352, 14, 100], [520, 352, 8, 70], [580, 350, 10, 60], [640, 348, 8, 70], [680, 350, 9, 60], [760, 348, 10, 60], [830, 347, 16, 70], [870, 346, 16, 60], [960, 349, 10, 60], [1020, 350, 14, 36], [1080, 346, 14, 22], [1190, 348, 14, 8], [1325, 350, 10, 0]], 31),
    ...cloud(f, [[380, 354, 5, 80], [530, 352, 4, 60], [700, 350, 4, 70], [1000, 349, 4, 0]], 41),
    ...cloud(f, [[510, 353, 7, 24], [528, 353, 7, 0]], 42),
    ...cloud(f, [[655, 351, 7, 24], [675, 351, 7, 0]], 43),
    ...cloud(f, [[290, 366, 18, 50], [315, 366, 18, 0]], 44),
    ...cloud(f, [[215, 440, 8, 16], [250, 410, 16, 24], [290, 375, 16, 0]], 32),
    ...cloud(f, [[235, 313, 4, 14], [300, 313, 5, 14], [314, 340, 14, 0]], 33),
    ...cloud(f, [[204, 345, 4, 14], [242, 348, 3, 0]], 34),
    ...cloud(f, [[415, 345, 8, 30], [460, 340, 8, 8], [500, 315, 8, 6], [535, 308, 8, 0]], 35),
    ...cloud(f, [[725, 338, 8, 22], [760, 323, 3, 22], [855, 323, 3, 20], [880, 340, 10, 0]], 36),
    ...cloud(f, [[560, 370, 8, 8], [600, 368, 10, 0]], 37),
    ...cloud(f, [[830, 358, 12, 24], [920, 368, 10, 8], [945, 370, 8, 0]], 38),
    ...cloud(f, [[208, 403, 5, 14], [240, 380, 10, 30], [256, 408, 10, 20], [275, 385, 14, 0]], 39),
    ...cloud(f, [[860, 325, 6, 10], [960, 345, 12, 20], [1080, 340, 10, 16], [1190, 340, 8, 0]], 40),
  ];
  return (
    <Plot x={751} y={855} w={559} h={134}>
      <Grid f={f} x0={178} x1={1351} y0={145} y1={442} />
      <Dots pts={pts} c="#ff00ff" />
      <rect x={812} y={868} width={1} height={100} fill="#ff00ff" />
      <rect x={812} y={967} width={480} height={1} fill="#f4f4f4" />
      <Txt x={769} y={917} c="#ff00ff" a="middle" rot len={98}>
        dash_brk_balance...
      </Txt>
    </Plot>
  );
}

const F9 = frame(1370, 715, 2.851);
function XYAps() {
  const f = F9;
  const pts = [
    ...cloud(f, [[216, 706, 8, 14], [240, 714, 18, 28], [330, 712, 14, 50], [420, 703, 12, 50], [470, 692, 8, 60], [520, 684, 8, 70], [570, 670, 12, 90], [620, 658, 18, 100], [680, 630, 28, 80], [740, 605, 34, 90], [800, 562, 36, 90], [860, 518, 30, 50], [900, 487, 16, 18], [960, 455, 18, 20], [1000, 415, 12, 16], [1070, 365, 20, 16], [1100, 290, 12, 20], [1150, 245, 10, 22], [1200, 185, 10, 14], [1220, 172, 6, 0]], 51),
    ...cloud(f, [[640, 625, 10, 40], [740, 588, 10, 50], [770, 550, 8, 60], [860, 505, 6, 0]], 52),
    ...cloud(f, [[640, 640, 6, 50], [740, 625, 8, 60], [800, 588, 8, 50], [870, 525, 6, 0]], 53),
    ...cloud(f, [[1205, 180, 24, 14], [1240, 180, 10, 0]], 54),
    ...cloud(f, [[1150, 265, 20, 8], [1205, 270, 20, 0]], 55),
    ...nums("723,247 742,254 762,257 893,244 1005,196 1027,190 415,307 489,317 237,401 258,589 243,604 218,614 218,628 243,652 508,652 571,640 973,382 1119,334 1171,170 1183,170 404,679").map(([x, y]): Pt => [f.X(x), f.Y(y)]),
  ];
  const minor: number[] = [];
  for (let y = 163; y < 756; y += 30.75) minor.push(y);
  return (
    <Plot x={1377} y={747} w={475} h={242}>
      <Grid f={f} x0={212} x1={1322} y0={136} y1={757} />
      <Dots pts={pts} c="#00ccff" />
      <path d={`M${f.X(1210)} ${f.Y(168)}h15`} stroke="#00ccff" strokeWidth="2.4" strokeDasharray="1.4 0.8" />
      <XAxis f={f} x0={212} x1={1322} y={755} first={212} step={100.8} every={5} labels={["0", "50", "100"]} />
      <YAxis
        f={f}
        x={214}
        y0={136}
        y1={757}
        c="#00ccff"
        w={1}
        minor={minor}
        major={[
          [163, "100"],
          [286, "80"],
          [409, "60"],
          [532, "40"],
          [655, "20"],
        ]}
      />
      <BoldX x={f.X(212)} y={f.Y(727)} />
      <Txt x={1395} y={863} c="#00ccff" a="middle" rot len={78}>
        ecu_athcan (%)
      </Txt>
    </Plot>
  );
}

/* ---------- Application frame ---------- */

function PulseMark({ size }: { size: number }) {
  return (
    <svg width={size} height={size} viewBox="0 0 24 24">
      <rect width="24" height="24" fill="#00b0b9" />
      <path d="M1 13h2l3-6 4 11 3.5-12 4 10L20.500 8l2 3" fill="none" stroke="#fff" strokeWidth="1.3" />
    </svg>
  );
}

const MENU: [number, string, number][] = [
  [6, "File", 0],
  [44, "Edit", 0],
  [84, "View", 0],
  [129, "Insert", 0],
  [178, "Data", 0],
  [222, "Display", 3],
  [280, "Worksheet", 1],
  [356, "Map", 0],
  [399, "Tools", 0],
  [447, "Window", 0],
  [511, "Help", 0],
];

const K = { fill: "none", stroke: "#000", strokeWidth: 1.2 } as const;
const Sep = () => <path d="M.5 0V18" stroke="#888" />;
const Caret = () => <path d="M0 7h6l-3 3.500z" fill="#000" />;

const TOOLS: [number, React.ReactNode][] = [
  [8, <path d="M.6 1.500h7.500l3.500 3.500v10.500H.6zM8 1.500V5h3.500" {...K} />],
  [30, <path d="M.6 15V6h3l1-1.500h3V6h3v3M.6 15L4 9h10.500L11 15zM8 4c2-2 4-2 5 1" {...K} />],
  [53, <g><path d="M0 2h14v14H2L0 14z" fill="#000" /><path d="M3 2.500h8v5H3zM5 11h5v5H5z" fill="#f0f0f0" /><path d="M6 12h2v3H6z" fill="#000" /></g>],
  [73, <Sep />],
  [81, <g><path d="M3 2h9v5H3z" fill="#fff" stroke="#000" /><path d="M0 7h15v7H0z" fill="#000" /><path d="M3 11.500h9v4H3z" fill="#f0f0f0" stroke="#000" /></g>],
  [102, <Sep />],
  [111, <g><path d="M0 6l9 4M0 9.500h9M5 2v6M8 2v6" {...K} strokeWidth={1.300} /><circle cx="11" cy="10.500" r="2" {...K} strokeWidth={1.500} /><circle cx="7" cy="13.500" r="2" {...K} strokeWidth={1.500} /></g>],
  [134, <path d="M.6 1.500h8.500v10H.6zM4.600 5.500h9v10h-9z" fill="#f0f0f0" stroke="#000" strokeWidth="1.200" />],
  [159, <path d="M.6 3.500h9v10H.6zM3 1.500h4v2H3zM4.600 7.500h7v8.500h-7z" fill="#f0f0f0" stroke="#b8b8b8" />],
  [177, <Sep />],
  [185, <g><path d="M9 15.500H.6v-14h7.500l4 3.500v5M8 1.500V5h4" {...K} /><path d="M8 11l6 3M8 14h4" {...K} /><circle cx="14" cy="13" r="1.700" {...K} /><circle cx="11" cy="15.500" r="1.500" {...K} /></g>],
  [208, <g><circle cx="6" cy="7" r="5.500" fill="none" stroke="#b8b8b8" /><path d="M6 4v3h4M7 10h3v6H7zM11 10h3v6h-3z" fill="#f0f0f0" stroke="#b8b8b8" /></g>],
  [229, <Sep />],
  [237, <g><path d="M.6 1.500h15v14H.6z" {...K} strokeWidth={1.400} /><path d="M5 1.500v14M11 1.500v14M.6 6h15M.6 11h15" {...K} /></g>],
  [262, <Caret />],
  [276, <path d="M.5 2h12v13H.500z" fill="#ff0000" stroke="#fff" />],
  [300, <Caret />],
  [314, <path d="M.6 1.500h7v6h-7zM2.500 3.500h7v6h-7zM4.500 5.500h7v6h-7zM6.500 8h7v7h-7zM6.500 8l7 7" fill="#f0f0f0" stroke="#000" strokeWidth="1.100" />],
  [332, <Caret />],
  [343, <Sep />],
  [352, <g><path d="M.6 6.500h9v8.500h-9z" fill="#a8a8a8" stroke="#000" /><path d="M5 6V4a3 3 0 0 1 8 0v6M7.500 6V4.500a1 1 0 0 1 3 0V10" fill="none" stroke="#000" /></g>],
  [377, <g><path d="M.6 7h9v8h-9z" fill="#a8a8a8" stroke="#000" /><path d="M1.500 7V4a3.600 3.600 0 0 1 7.200 0v3M3.500 7V4.500a1.500 1.500 0 0 1 3 0V7" fill="none" stroke="#000" /></g>],
  [395, <Sep />],
  [399, <g><path d="M.5-1.500h22v20H.500z" fill="#cce4f7" stroke="#b5d7f0" /><path d="M4 1.500h15v14H4z" fill="#f0f0f0" stroke="#000" strokeWidth="1.300" /><path d="M4 2h5v13H4z" fill="#808080" /><path d="M9.500 2v13" stroke="#000" /><path d="M14.500 2v13M10 6.500h9M10 11h9" stroke="#b8b8b8" /></g>],
  [429, <path d="M1 14l6-9M5 14l6-9M0 15h2M4 15h2" fill="none" stroke="#b8b8b8" />],
  [447, <Sep />],
  [456, <g><path d="M7 1c4 0 6.500 2.300 6.500 5.500S11 12 9 12l-1 4-2-4C2 11.500.600 9 .600 6.500.600 3.300 3.500 1 7 1z" {...K} /><path d="M7 3v1.500M6 6h1.500V10" {...K} strokeWidth={1.500} /></g>],
];

function slots<T extends [number, ...unknown[]]>(a: T[], i: number) {
  return i + 1 < a.length ? (a[i + 1][0] as number) - (a[i][0] as number) : 60;
}

function TopBars() {
  return (
    <>
      <div className="flex h-[23px] shrink-0 items-center bg-white pl-0.5">
        <PulseMark size={16} />
        <span className="ml-[5px] flex-1 text-[12px] tracking-[-0.38px]">991 Cup phase 2 v4 Val de Vienne - Pi Toolbox*</span>
        <svg width="121" height="21" viewBox="0 0 121 21" className="self-start" shapeRendering="crispEdges">
          <path d="M0 10.500h10" stroke="#000" />
          <path d="M45.500 7.500h7v7h-7zM47.500 7V5.500h7v7H53" fill="none" stroke="#000" />
          <rect x="74" y="0" width="45" height="21" fill="#e81123" />
          <path d="M91.500 5.500l9.500 9.500M101 5.500l-9.500 9.500" stroke="#fff" shapeRendering="auto" />
        </svg>
      </div>
      <nav className="flex h-5 shrink-0 items-center bg-[#f0f0f0] pl-1.5 text-[12px] tracking-[-0.28px]">
        {MENU.map(([x, t, u], i) => (
          <span key={t} className="shrink-0" style={{ width: slots(MENU, i) }}>
            <Under t={t} u={u} />
          </span>
        ))}
      </nav>
      <div className="flex h-[26px] shrink-0 items-start border-b-2 border-[#cdcdcd] bg-[#f0f0f0] pt-1 pl-2">
        {TOOLS.map(([x, g], i) => (
          <span key={x} className="shrink-0" style={{ width: slots(TOOLS, i) }}>
            <svg width="18" height="18" viewBox="0 0 18 18" className="overflow-visible">
              {g}
            </svg>
          </span>
        ))}
      </div>
    </>
  );
}

function Expander() {
  return (
    <svg width="9" height="9" viewBox="0 0 9 9" shapeRendering="crispEdges" className="shrink-0">
      <path d="M.5.5h8v8h-8zM2 4.500h5" fill="none" stroke="#000" />
    </svg>
  );
}

const PROPS: [string, string?, boolean?][] = [
  ["#Appearance"],
  ["Color", "!"],
  ["Data selection", "Cesar V. : 01:39,079, Ces...", true],
  ["Label", "Cesar V."],
  ["#Details"],
  ["Car name", "Cesar V."],
  ["Driver name", "Cesar"],
  ["Engine test", "no", true],
  ["Outing number", "84", true],
  ["Session number", "1", true],
  ["Track name"],
  ["#Comments"],
  ["Long comment"],
  ["Short comment"],
  ["System details", "Source: Offload; Device...", true],
  ["#Lap Information"],
  ["Fast lap number", "180", true],
  ["Fast lap time", "01:39,079", true],
  ["First lap number", "178"],
  ["Last lap number", "180", true],
];

function Sidebar() {
  return (
    <aside className="flex w-[279px] shrink-0 flex-col border-r-4 border-b-[3px] border-l-2 border-[#cdcdcd] bg-white text-[12px] tracking-[-0.28px]">
      <header className="flex h-[23px] shrink-0 items-center bg-[#c8c8c8] pb-0.5 pl-1">
        <span className="flex-1">Tasks</span>
        <svg width="63" height="12" viewBox="0 0 63 12">
          <path d="M5 1v10L0 6zM23 1v10l5-5z" fill="#000" />
          <path d="M47 2l8 8M55 2l-8 8" stroke="#000" strokeWidth="2" />
        </svg>
      </header>
      <div className="flex h-[18px] shrink-0 items-center bg-[#efefef] pl-1">
        <Expander />
        <span className="ml-2 h-[14px] w-[14px] border-2 border-[#c0c0c0] bg-[#ff0000]" />
        <span className="ml-[3px]">Comparison</span>
      </div>
      <div className="ml-[19px] flex h-[18px] shrink-0 items-center border border-[#d0d0d0] bg-[#f2f2f2] pl-[19px]">
        <svg width="15" height="15" viewBox="0 0 15 15">
          <circle cx="7" cy="7" r="6.500" fill="#ff0000" stroke="#bbb" />
          <path d="M5 7l5-1 4 4-3 4-5-2z" fill="#000" />
          <path d="M7 9h2v2H7zM10 11h2v2h-2zM4 3h2v1H4z" fill="#fff" />
        </svg>
        <span className="ml-[3px] tracking-[-0.47px] whitespace-nowrap">Cesar V. : 01:39,079, Cesar, 001 : Lap 180</span>
      </div>
      <div className="flex h-[18px] shrink-0 items-center bg-[#efefef] pl-[21px]">
        <span className="h-[14px] w-[14px] border-2 border-[#c0c0c0] bg-white" />
        <span className="ml-[3px]">Fiab</span>
      </div>
      <div className="h-[503px] shrink-0" />
      <div className="h-[6px] shrink-0 border-y border-[#c8c8c8] bg-[#f0f0f0]" />
      <div className="flex min-h-0 flex-1">
        <div className="h-[371px] w-[254px] overflow-hidden">
          {PROPS.map(([k, v, dim], i) =>
            k[0] === "#" ? (
              <div key={i} className="flex h-[19px] items-center bg-[#efefef] pl-1">
                <Expander />
                <span className="ml-[7px]">{k.slice(1)}</span>
              </div>
            ) : (
              <div key={i} className="flex h-[19px] items-center pl-0.5 whitespace-nowrap">
                <span className="w-[120px]">{k}</span>
                {v === "!" ? (
                  <span className="h-[17px] w-[131px] border border-black bg-[#ff0000]" />
                ) : (
                  <span className={dim ? "text-[#a0a0a0]" : "text-black"}>{v}</span>
                )}
              </div>
            ),
          )}
        </div>
        <div className="ml-0.5 flex w-[17px] flex-col items-center bg-[#f0f0f0]">
          <svg width="17" height="17" viewBox="0 0 17 17">
            <path d="M4 11h9L8.500 6z" fill="#000" />
          </svg>
          <div className="h-[237px] w-full bg-[#cdcdcd]" />
          <svg width="17" height="17" viewBox="0 0 17 17" className="mt-auto">
            <path d="M4 5h9l-4.500 5z" fill="#000" />
          </svg>
        </div>
      </div>
    </aside>
  );
}

function Tabs() {
  const tab = "flex h-[19px] items-center justify-center border-r border-b-2 border-[#ebebeb] bg-[#c8c8c8]";
  return (
    <div className="flex h-6 shrink-0 items-start border-t border-b-[3px] border-t-black border-b-[#cdcdcd] bg-[#c8c8c8] text-[12px] tracking-[-0.3px] whitespace-nowrap">
      <span className={tab + " w-[21px]"}>+</span>
      <span className={tab + " w-[41px]"}>Driver</span>
      <span className="flex h-5 w-[92px] items-center justify-center border border-t-0 border-b-2 border-black bg-white tracking-[-0.95px] font-bold">Brakes/Throttle</span>
      <span className={tab + " w-[38px]"}>Tyres</span>
      <span className={tab + " w-[55px]"}>Gearbox</span>
      <span className={tab + " w-[93px]"}>Worksheet/Perf</span>
      <span className={tab + " w-[47px]"}>Engine</span>
    </div>
  );
}

const speedLegend: Entry[] = [
  { c: "#ffcc00", v: "135.38 °", notch: true },
  { c: "#ff9900", v: "-0.43 bar", notch: true },
  { c: "#4169e1", v: "59.56 kph", sel: true, notch: true },
  { c: "#4169e1", v: "0.00 s", notch: true },
  { c: "#ffffff", v: "67.13 kph", notch: true },
  { c: "#ffffff", v: "0.00 s", notch: true },
  { c: "#ff00ff", v: "63.95 kph", notch: true },
  { c: "#ff00ff", v: "0.00 s", notch: true },
  { c: "#ff0000", v: "67.36 kph", notch: true },
  { c: "#ff0000", v: "0.00 s", notch: true },
];

function BarPanel() {
  return (
    <Panel title="[Comparison] - Bar" box="h-[397px] w-[238px]" lock={false}>
      <div className="flex flex-col">
        <Plot x={1679} y={95} w={236} h={353}>
          <BarScale id="barF" x={240} major={[408, 535, 658, 784, 910, 1035, 1159, 1285]} labels={["70", "60", "50", "40", "30", "20", "10", "0"]} step={25.06} title="Brake Risk F ()" tx={1703} />
          <BarScale id="barR" x={582} major={[370, 552, 735, 918, 1101, 1285]} labels={["50", "40", "30", "20", "10", "0"]} step={36.6} title="Brake Risk R ()" tx={1817} />
        </Plot>
        <div className="flex gap-[52px] pl-[31px]">
          <div className="w-[62px]">
            <ValueBox e={{ c: "#4169e1", v: "0.00", sel: true }} />
          </div>
          <div className="w-[62px]">
            <ValueBox e={{ c: "#4169e1", v: "0.00" }} />
          </div>
        </div>
      </div>
    </Panel>
  );
}

function stats(...a: [number, string][]): Stat[] {
  return a.map(([x, t]) => ({ x, t, u: t === "Min:" ? 2 : t === "Max:" ? 0 : undefined }));
}

function Worksheet() {
  return (
    <div className="flex min-h-0 flex-1 flex-col bg-[#f0f0f0] pt-0.5 pl-0.5">
      <div className="flex gap-[5px]">
        <Panel
          title="[Comparison] - Wheel speeds/Lock"
          box="h-[397px] w-[866px]"
          footer={<Stats left={282} c="#4169e1" items={stats([295, "dash_speed_fl (kph)"], [400, "Min:"], [427, "52.77"], [479, "Max:"], [510, "254.36"], [562, "Mean:"], [599, "151.30"], [679, "Rate:"], [717, "100 Hz"])} />}
        >
          <WheelSpeeds />
          <div className="h-[354px] shrink-0">
            <Legend w="w-[93px]" items={speedLegend}>
              <div className="mt-[58px] mb-[2px] flex h-3 items-center justify-end">
                <DoubleArrow />
              </div>
              <TrackMap />
            </Legend>
          </div>
        </Panel>
        <Panel
          title="[Comparison] - Time/Distance Chart"
          box="h-[397px] w-[521px]"
          footer={<Stats left={1153} c="#00ccff" arrow items={stats([1166, "SR Brake F (%)"], [1246, "Min:"], [1273, "0.00"], [1325, "Max:"], [1356, "15.15"], [1408, "Mean:"], [1445, "0.41"], [1525, "Rate:"], [1562, "50 Hz"])} />}
        >
          <SRBrake />
          <Legend
            w="w-[67px]"
            items={[
              { label: "SR Brake F" }, { c: "#00ccff", v: "0.00 %", sel: true },
              { label: "SR Brake FL" }, { c: "#99ccff", v: "0.00" },
              { label: "SR Brake FR" }, { c: "#00ffff", v: "0.00 %" },
              { label: "SR Brake R" }, { c: "#ff00ff", v: "0.00 %" },
              { label: "SR Brake RL" }, { c: "#ff99cc", v: "0.00 %" },
              { label: "SR Brake RR" }, { c: "#cc99ff", v: "0.00 %" },
            ]}
          />
        </Panel>
        <BarPanel />
      </div>
      <div className="mt-[5px] flex gap-[5px]">
        <div className="flex w-[464px] flex-col gap-[5px]">
          <Panel
            title="[Comparison] - Time/Distance Chart"
            box="h-[309px]"
            footer={<Stats left={282} c="#00ccff" arrow items={stats([295, "ecu_athcan (%)"], [378, "Min:"], [405, "8.00"], [457, "Max:"], [489, "100.00"], [540, "Mean:"], [577, "50.85"], [653, "..."])} />}
          >
            <Throttle />
            <Legend
              w="w-[73px]"
              items={[
                { label: "ecu_aps" }, { c: "#ff0000", v: "0.00 %", notch: true },
                { label: "ecu_athcan" }, { c: "#00ccff", v: "8.50 %", sel: true, notch: true },
                { label: "ecu_uaps_a" }, { c: "#ffffff", v: "0.76 V" },
                { label: "ecu_uaps_b" }, { c: "#ff9900", v: "0.38 V" },
                { label: "ecu_uthrottle" }, { c: "#ff00ff", v: "0.92 V" },
                { label: "ecu_uthrottle_b" }, { c: "#00ff00", v: "4.06 V" },
              ]}
            />
          </Panel>
          <Panel title="[Comparison] - X/Y Chart" box="h-[218px]" footer={<XYFooter pl={7} right="ecu_uthrottle (V)" width={385} />}>
            <XYThrottle />
            <Legend
              w="w-[54px]"
              items={[{ label: "Cursor" }, { c: "#00ff00", v: "0.92 V" }, { c: "#00ff00", v: "4.06 V" }, { label: "Closest" }, { c: "#00ff00", v: "No V..." }, { c: "#00ff00", v: "No V..." }]}
            />
          </Panel>
        </div>
        <div className="flex w-[621px] flex-col gap-[5px]">
          <Panel
            title="[Comparison] - Time/Distance Chart"
            box="h-[353px]"
            footer={<Stats left={751} c="#00ffff" items={stats([764, "dash_brk_balance (%)"], [879, "Min:"], [906, "0.00"], [958, "Max:"], [989, "54.10"], [1041, "Mean:"], [1079, "13.10"], [1158, "Rate:"], [1195, "10 Hz"])} />}
          >
            <Balance />
            <Legend
              w="w-[85px]"
              items={[
                { label: "RPM" }, { c: "#339966", v: "4402.00 rpm", notch: true },
                { label: "abs_active" }, { c: "#cc99ff", v: "No Value" },
                { label: "abs_pbrake_f" }, { c: "#4169e1", v: "No Value" },
                { label: "abs_pbrake_r" }, { c: "#ff0000", v: "No Value" },
                { label: "dash_brk_balance" }, { c: "#00ffff", v: "0.00 %", sel: true },
                { label: "dash_pbrake_f" }, { c: "#ff9900", v: "-0.43 bar", notch: true },
                { label: "dash_pbrake_r" }, { c: "#ffff99", v: "-0.23 bar", notch: true },
              ]}
            />
          </Panel>
          <Panel title="[Comparison] - X/Y Chart" box="h-[174px]" solid footer={<XYFooter pl={7} right="Brake tot abs (user defined)" width={539} />}>
            <XYBalance />
            <Legend
              w="w-[57px]"
              items={[{ label: "Cursor" }, { c: "#ff00ff", v: "No Va..." }, { c: "#ff00ff", v: "No Va..." }, { label: "Closest" }, { c: "#ff00ff", v: "No Va..." }, { c: "#ff00ff", v: "No Va..." }]}
            />
          </Panel>
        </div>
        <div className="flex w-[540px] flex-col gap-[5px]">
          <Panel
            title="[Comparison] - Time/Distance Chart"
            box="h-[245px]"
            footer={<Stats left={1377} c="#ff0000" arrow items={stats([1390, "Brake aggressivity (bar/s)"], [1521, "Min:"], [1548, "0.00"], [1600, "Max:"], [1632, "1010.04"], [1683, "Mean:"], [1721, "7.26 (dis.)"], [1803, "..."])} />}
          >
            <Aggressivity />
            <Legend w="w-[94px]" items={[{ label: "Brake aggressivity" }, { c: "#ff0000", v: "0.53 bar/s", sel: true }, { label: "Brake efficiency" }, { c: "#00ccff", v: "0.00 G/bar" }]} />
          </Panel>
          <Panel title="[Comparison] - X/Y Chart" box="h-[282px]" footer={<XYFooter pl={7} right="ecu_aps (%)" width={455} />}>
            <XYAps />
            <Legend
              w="w-[60px]"
              items={[{ label: "Cursor" }, { c: "#00ccff", v: "0.00 %" }, { c: "#00ccff", v: "8.50 %" }, { label: "Closest" }, { c: "#00ccff", v: "No Val..." }, { c: "#00ccff", v: "No Val..." }]}
            />
          </Panel>
        </div>
      </div>
    </div>
  );
}

/* ---------- Taskbar ---------- */

const APPS: [string, boolean, React.ReactNode][] = [
  ["tasks", false, <g fill="none" stroke="#e8e8e8"><path d="M5 5v2h8V5M5 19v-2h8v2M5.500 9.500h7v5h-7zM16 5v4M16 11v8" /><path d="M15 8h2v2h-2z" fill="#e8e8e8" /></g>],
  ["files", true, <g><path d="M1 3h8l2 2h11v15H1z" fill="#e8a33d" /><path d="M1 6h21v14H1z" fill="#ffd561" /><path d="M6 12h12v9h-3v-4H9v4H6z" fill="#3b97dd" /></g>],
  ["chrome", true, <g><circle cx="12" cy="12" r="12" fill="#fff" /><path d="M12 0a12 12 0 0 1 10.400 6H12a6 6 0 0 0-5.200 3L1.600 6A12 12 0 0 1 12 0z" fill="#e33b2e" /><path d="M22.400 6A12 12 0 0 1 12 24l5.200-9A6 6 0 0 0 16 7.500V6z" fill="#fcc934" /><path d="M1.600 6l5.200 9a6 6 0 0 0 6.500 2.800L10.500 24A12 12 0 0 1 1.600 6z" fill="#1ea446" /><circle cx="12" cy="12" r="5.500" fill="#fff" /><circle cx="12" cy="12" r="4.400" fill="#1a73e8" /></g>],
  ["steam", false, <g><circle cx="12" cy="12" r="11.500" fill="#14497c" /><circle cx="15.500" cy="9" r="3.800" fill="none" stroke="#fff" strokeWidth="1.600" /><path d="M1 12l8 3.500 4-4" fill="none" stroke="#fff" strokeWidth="3" /><circle cx="9" cy="16" r="3" fill="none" stroke="#fff" strokeWidth="1.400" /></g>],
  ["monitor", false, <g><path d="M1 4l6-2v18l-6-1z" fill="#b8bcc0" /><rect x="6" y="3" width="16" height="13" fill="#e8eaec" /><rect x="8" y="5" width="12" height="9" fill="#d8ecf5" /><path d="M8 12l3-3 2 3 3-5 2 4 2-2" fill="none" stroke="#2878a8" /><path d="M10 17h8l2 4H8z" fill="#c8c8c8" /></g>],
  ["toolbox", true, <PulseMark size={24} />],
  ["discord", true, <g><circle cx="12" cy="12" r="12" fill="#5865f2" /><path d="M6 8c3-2 9-2 12 0l1.500 7-3 2-1.500-1.500H9L7.500 17l-3-2z" fill="#fff" /><circle cx="9.500" cy="12" r="1.400" fill="#5865f2" /><circle cx="14.500" cy="12" r="1.400" fill="#5865f2" /><circle cx="18" cy="18" r="6" fill="#ed4245" /><circle cx="18" cy="18" r="2.500" fill="#fff" /></g>],
  ["speaker", false, <g><path d="M15 3c9 3 9 13 0 17z" fill="#a8a8a8" /><ellipse cx="11" cy="11.500" rx="9.500" ry="10.500" fill="#d2d2d2" transform="rotate(-12 11 11.500)" /><ellipse cx="10.500" cy="11.500" rx="6.500" ry="8" fill="#9a9a9a" /><circle cx="10.500" cy="11.500" r="3.500" fill="#dedede" /></g>],
  ["player", true, <g><circle cx="12" cy="12" r="11" fill="#2b2b30" stroke="#e07a4a" strokeWidth="2" /><path d="M3 18a11 11 0 0 0 18 0" fill="none" stroke="#8a5ad0" strokeWidth="2" /><path d="M9 6l9 6-9 6z" fill="#fff" /></g>],
  ["store", true, <g><path d="M6 6V2h12v4" fill="none" stroke="#2aa5e8" strokeWidth="2" /><rect x="0.500" y="5" width="23" height="19" rx="2" fill="#f6f6f6" /><path d="M7 10h4.500v4.500H7z" fill="#f25022" /><path d="M12.500 10H17v4.500h-4.500z" fill="#7fba00" /><path d="M7 15.500h4.500V20H7z" fill="#00a4ef" /><path d="M12.500 15.500H17V20h-4.500z" fill="#ffb900" /></g>],
];

function Van() {
  return (
    <svg width="79" height="40" viewBox="0 0 79 40">
      <path d="M10 31q20-4 69-2v11H4z" fill="#e9d3ae" />
      <path d="M64 23h15v6H64z" fill="#25b8dc" />
      <path d="M10 37c3-9 3-16 1-22" stroke="#a0622d" strokeWidth="2" fill="none" />
      <path d="M11 15C6 11 2 14 2 20M11 15C8 7 3 7 1 9M11 15C14 8 20 10 20 15M11 15c6 0 8 5 7 9M11 15c1-7 5-9 9-8" stroke="#1f9a78" strokeWidth="2.500" fill="none" />
      <path d="M18 9c4-5 24-6 32-1-6 5-26 5-32 1z" fill="#1166a8" />
      <path d="M47 8c3-4 15-4 19 0-4 4-16 4-19 0z" fill="#3cc2cf" />
      <path d="M20 19q2-6 6-6h30q8 0 10 6l2 7v4H18z" fill="#e2e4e8" />
      <path d="M24 12h34l4 3H20z" fill="#b9bcc2" />
      <path d="M24 17h9v7h-9zM36 17h9v7h-9zM48 17h8l3 7H48z" fill="#8a97a8" />
      <path d="M18 25q24-2 50 0v9H18z" fill="#dd1a22" />
      <circle cx="29" cy="34" r="3.800" fill="#4a3030" />
      <circle cx="56" cy="34" r="3.800" fill="#4a3030" />
      <circle cx="29" cy="34" r="1.800" fill="#ddd" />
      <circle cx="56" cy="34" r="1.800" fill="#ddd" />
    </svg>
  );
}

function Taskbar() {
  return (
    <div className="flex h-10 shrink-0 bg-[linear-gradient(90deg,#1f1d20_0%,#221f22_19%,#2a1e26_26%,#3c1f2a_33%,#472a33_38%,#4a2a38_42%,#3a3340_46%,#2a2360_49%,#29235c_52%,#2a2550_58%,#332c46_61%,#48242e_64%,#452832_67%,#3c3a40_71%,#454548_73%,#3a3040_77%,#221e26_82%,#1f1c21_88%,#262429_100%)] text-white">
      <div className="flex w-12 items-center justify-center">
        <svg width="16" height="16" viewBox="0 0 16 16">
          <path d="M0 2.200L6.500 1.300V7.500H0zM7.500 1.200L16 0V7.500H7.500zM0 8.500H6.500V14.700L0 13.800zM7.500 8.500H16V16L7.500 14.800z" fill="#fff" />
        </svg>
      </div>
      <div className="flex w-[288px] items-center bg-[#f2f2f2] pl-3 text-[#333]">
        <svg width="16" height="16" viewBox="0 0 16 16" className="mr-3">
          <circle cx="10" cy="6" r="5" fill="none" stroke="#222" strokeWidth="1.200" />
          <path d="M6.300 9.700L1 15" stroke="#222" strokeWidth="1.200" />
        </svg>
        <span className="w-[169px] text-[15px] tracking-[-0.55px] whitespace-nowrap">Taper ici pour rechercher</span>
        <Van />
      </div>
      <div className="ml-px flex">
        {APPS.map(([id, run, icon]) => (
          <div
            key={id}
            className={id === "toolbox" ? "flex w-[49.1px] shrink-0 flex-col items-center bg-white/20" : "flex w-[49.1px] shrink-0 flex-col items-center"}
          >
            <svg width="24" height="24" viewBox="0 0 24 24" className="mt-2 shrink-0 overflow-visible">
              {icon}
            </svg>
            {run && <div className={id === "toolbox" ? "mt-auto h-0.5 w-full bg-[#76b9ed]" : "mt-auto h-0.5 w-10 bg-[#76b9ed]"} />}
          </div>
        ))}
      </div>
      <div className="ml-auto flex items-center">
        <svg width="25" height="22" viewBox="0 0 25 22">
          <circle cx="17" cy="7" r="6.500" fill="#f6a21d" />
          <path d="M5 21a5 5 0 0 1 0-9 7 7 0 0 1 13-2 5.500 5.500 0 0 1 1 11z" fill="#c4d8f5" />
        </svg>
        <span className="ml-2 w-[38px] text-[15px] tracking-[-0.7px]">19°C</span>
        <span className="w-[73px] text-[15px] tracking-[-0.75px] whitespace-nowrap">Ciel couvert</span>
        <svg width="100" height="24" viewBox="0 0 100 24" className="ml-[22px]" fill="none" stroke="#fff">
          <path d="M2 15l5.500-5.500L13 15" strokeWidth="1.300" />
          <rect x="27" y="8" width="7" height="7" rx="1" />
          <path d="M34 10l3-1.500v6L34 13M28 5q3-2.500 7 0M28 18q3 2.500 7 0" />
          <path d="M51 19a10 10 0 0 1 12-12M54 19a8 8 0 0 1 9-8.500M57 19a5 5 0 0 1 6-5" strokeWidth="1.200" />
          <circle cx="62" cy="18" r="1.200" fill="#fff" />
          <path d="M73 10h2.500l3.500-3.500v11L75.500 14H73zM82 9.500q1.500 2.500 0 5M84.500 8q2.500 4 0 8M87 6.500q3.500 5.500 0 11" />
        </svg>
        <div className="-ml-[3px] w-[60px] text-center text-[12px] leading-[18px] tracking-[-0.5px]">
          <div>14:18</div>
          <div>18/06/2023</div>
        </div>
        <svg width="17" height="17" viewBox="0 0 17 17" className="mr-5 ml-4">
          <path d="M.7.700h15.600v12H11l-2.500 3-2.500-3H.700z" fill="none" stroke="#fff" strokeWidth="1.100" />
        </svg>
        <span className="mr-1 h-10 w-px bg-[#6a6a6c]" />
      </div>
    </div>
  );
}

export default function App() {
  return (
    <div className="flex h-[1080px] w-[1920px] flex-col overflow-hidden bg-white font-['Open_Sans',sans-serif] text-black">
      <TopBars />
      <div className="flex h-[962px] shrink-0">
        <Sidebar />
        <main className="flex min-w-0 flex-1 flex-col border-r-[3px] border-[#cdcdcd]">
          <Worksheet />
          <Tabs />
        </main>
      </div>
      <div className="h-[9px] shrink-0 bg-linear-to-r from-white from-80% to-[#008000]" />
      <Taskbar />
    </div>
  );
}
